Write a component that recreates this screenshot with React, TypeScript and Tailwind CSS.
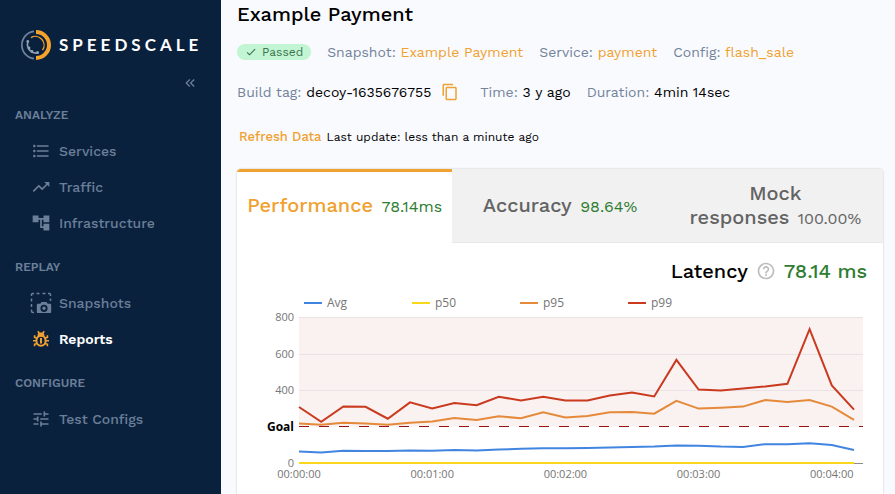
import type { ReactNode } from "react";
import {
  MdAccountTree,
  MdCheck,
  MdContentCopy,
  MdFormatListBulleted,
  MdHelpOutline,
  MdKeyboardDoubleArrowLeft,
  MdTrendingUp,
  MdTune,
} from "react-icons/md";

const STEP = 22.2;
const PLOT = { left: 62, right: 626, top: 27, bottom: 173 };

const series = [
  {
    name: "Avg",
    color: "#4285e0",
    values: [63, 57, 67, 65, 65, 69, 67, 72, 69, 74, 78, 81, 81, 83, 85, 88, 90, 96, 94, 90, 88, 103, 103, 108, 99, 72],
  },
  {
    name: "p50",
    color: "#f8d71c",
    values: [0, 0, 0, 0, 0, 0, 0, 0, 0, 0, 0, 0, 0, 0, 0, 0, 0, 0, 0, 0, 0, 0, 0, 0, 0, 0],
  },
  {
    name: "p95",
    color: "#e58a3a",
    values: [216, 210, 221, 217, 210, 221, 228, 247, 236, 256, 245, 278, 250, 258, 278, 280, 270, 341, 298, 303, 309, 345, 334, 345, 309, 236],
  },
  {
    name: "p99",
    color: "#c93a1e",
    values: [307, 225, 310, 308, 243, 332, 299, 329, 316, 363, 343, 363, 343, 343, 370, 387, 365, 565, 403, 397, 408, 419, 434, 733, 425, 292],
  },
];

const toY = (value: number) => PLOT.bottom - (value / 800) * (PLOT.bottom - PLOT.top);

const toPoints = (values: number[]) =>
  values.map((v, i) => `${PLOT.left + i * STEP},${toY(v).toFixed(1)}`).join(" ");

function LogoMark() {
  return (
    <svg viewBox="0 0 32 32" className="w-8 h-8" fill="none" aria-hidden="true">
      <path d="M16 3a13 13 0 0 1 0 26" stroke="#f5a32c" strokeWidth="4" />
      <path d="M14 2.3a13.8 13.8 0 0 0 0 27.4" stroke="#71839a" strokeWidth="1.7" />
      <path d="M11 8.6a8.7 8.7 0 0 1 11.5 12.5" stroke="#f5a32c" strokeWidth="1.3" />
      <path d="M8 12.5a8.7 8.7 0 0 0 10.5 11.3" stroke="#8fa0b5" strokeWidth="1.6" />
      <circle cx="7.8" cy="12.5" r="1.4" fill="#8fa0b5" />
      <circle cx="9" cy="19" r="1.4" fill="#8fa0b5" />
      <circle cx="12" cy="22.5" r="1.4" fill="#8fa0b5" />
      <circle cx="17.5" cy="23.6" r="1.5" fill="#8fa0b5" />
    </svg>
  );
}

function SnapshotIcon() {
  return (
    <svg viewBox="0 0 22 22" className="w-[22px] h-[22px]" fill="none" aria-hidden="true">
      <path
        d="M1.5 4V2.5Q1.5 1.5 2.5 1.5H4M6.5 1.5h3M12.5 1.5h3M18 1.5h1.5q1 0 1 1V4M20.5 6.5v2.5M1.5 6.5v3M1.5 12v3M1.5 17.5v1.5q0 1.5 1.5 1.5h1"
        stroke="currentColor"
        strokeWidth="1.5"
      />
      <path
        fill="currentColor"
        fillRule="evenodd"
        d="M11.5 10h5l1.2 1.7H20q1.2 0 1.2 1.2v7q0 1.2-1.2 1.2H8q-1.2 0-1.2-1.2v-7q0-1.2 1.2-1.2h2.3zM14 12.7a3.6 3.6 0 1 0 0 7.2 3.6 3.6 0 0 0 0-7.2zm0 1.9a1.7 1.7 0 1 1 0 3.4 1.7 1.7 0 0 1 0-3.4z"
      />
    </svg>
  );
}

function BugIcon() {
  return (
    <svg viewBox="0 0 18 18" className="w-[18px] h-[18px]" fill="none" stroke="currentColor" aria-hidden="true">
      <path d="M5.8 1.2l1.5 2M12.2 1.2l-1.5 2" strokeWidth="1.6" />
      <path d="M5.6 6.6V5.400Q5.600 2.600 8 2.600h2q2.400 0 2.400 2.800v1.200z" fill="currentColor" stroke="none" />
      <ellipse cx="9" cy="10.8" rx="4.6" ry="5" strokeWidth="2" />
      <path d="M9 8v5.400" strokeWidth="2" />
      <path d="M4.800 8 2.600 7.300V5.200M4.500 10.800H1M4.800 13.600l-2.200.7v2M13.200 8l2.200-.7V5.200M13.500 10.800H17M13.200 13.600l2.200.7v2" strokeWidth="1.600" />
    </svg>
  );
}

function NavGroup({ title, children }: { title: string; children: ReactNode }) {
  return (
    <div className="pb-4">
      <h2 className="pl-[15px] pb-2 text-xs leading-5 font-semibold text-[#6b7f98]">{title}</h2>
      <ul>{children}</ul>
    </div>
  );
}

function NavItem({ icon, label, active = false }: { icon: ReactNode; label: string; active?: boolean }) {
  return (
    <li>
      <a
        href="#"
        aria-current={active ? "page" : undefined}
        className={
          active
            ? "flex items-center h-9 pl-[30px] gap-[7px] text-sm font-semibold text-white"
            : "flex items-center h-9 pl-[30px] gap-[7px] text-sm font-medium text-[#6b7f98]"
        }
      >
        <span className={active ? "flex w-[22px] justify-center text-[#f0a030]" : "flex w-[22px] justify-center"}>{icon}</span>
        {label}
      </a>
    </li>
  );
}

function Sidebar() {
  return (
    <aside className="w-[221px] shrink-0 bg-[#0a213e]">
      <div className="flex items-center gap-[7px] pl-5 pt-[29px]">
        <LogoMark />
        <span className="font-['Lato',sans-serif] text-[17px] leading-8 font-bold tracking-[4px] text-white">SPEEDSCALE</span>
      </div>
      <div className="flex justify-end pr-[23px] pt-[14px] pb-[14px]">
        <button type="button" aria-label="Collapse menu" className="text-[#6b7f98]">
          <MdKeyboardDoubleArrowLeft className="w-4 h-4" />
        </button>
      </div>
      <nav>
        <NavGroup title="ANALYZE">
          <NavItem icon={<MdFormatListBulleted className="w-5 h-5" />} label="Services" />
          <NavItem icon={<MdTrendingUp className="w-5 h-5" />} label="Traffic" />
          <NavItem icon={<MdAccountTree className="w-5 h-5" />} label="Infrastructure" />
        </NavGroup>
        <NavGroup title="REPLAY">
          <NavItem icon={<SnapshotIcon />} label="Snapshots" />
          <NavItem icon={<BugIcon />} label="Reports" active />
        </NavGroup>
        <NavGroup title="CONFIGURE">
          <NavItem icon={<MdTune className="w-5 h-5" />} label="Test Configs" />
        </NavGroup>
      </nav>
    </aside>
  );
}

function Tab({ label, value, active = false, good = false }: { label: string; value: string; active?: boolean; good?: boolean }) {
  return (
    <button
      type="button"
      role="tab"
      aria-selected={active}
      className={
        active
          ? "flex-1 min-w-0 h-[74px] px-2 pb-1 border-t-[3px] border-[#f0a12f] bg-white text-xl leading-6 font-medium text-[#f0a12f]"
          : "flex-1 min-w-0 h-[74px] px-2 border-b border-[#e9e9e9] bg-[#f1f1f1] text-xl leading-6 font-medium text-[#636363]"
      }
    >
      {label}{"\u00a0"}
      <span className={good ? "ml-[2px] text-base leading-6 font-normal text-[#2e7d32]" : "ml-[2px] text-base leading-6 font-normal text-[#636363]"}>
        {value}
      </span>
    </button>
  );
}

function LatencyChart() {
  return (
    <svg viewBox="0 0 646 195" className="block w-full font-['Open_Sans','Noto_Sans',sans-serif]" role="img" aria-label="Latency over time">
      {/* Legend */}
      {series.map((s, i) => (
        <g key={s.name}>
          <path d={`M${67 + i * 108} 13h18`} stroke={s.color} strokeWidth="2" />
          <text x={90 + i * 108} y="17" fontSize="12" fill="#757575">{s.name}</text>
        </g>
      ))}

      {/* Area above the goal */}
      <rect x={PLOT.left} y={PLOT.top} width={PLOT.right - PLOT.left} height={toY(200) - PLOT.top} fill="#faf1f1" />
      {[800, 600, 400].map((v) => (
        <path key={v} d={`M${PLOT.left} ${Math.round(toY(v)) + 0.5}H${PLOT.right}`} stroke="#eae2e4" />
      ))}
      {[800, 600, 400, 0].map((v) => (
        <text key={v} x="57" y={toY(v) + 4} fontSize="11" textAnchor="end" fill="#757575">{v}</text>
      ))}
      <text x="57" y={toY(200) + 4} fontSize="12" fontWeight="700" textAnchor="end" fill="#000">Goal</text>

      <path d={`M${PLOT.left} ${PLOT.bottom + 0.5}H${PLOT.right}`} stroke="#8c8c8c" />
      <path d={`M${PLOT.left} 136.5H${PLOT.right}`} stroke="#971414" strokeDasharray="10 10" />
      {series.map((s) => (
        <polyline key={s.name} points={toPoints(s.values)} fill="none" stroke={s.color} strokeWidth="2" />
      ))}
      {[0, 1, 2, 3, 4].map((m) => (
        <text key={m} x={PLOT.left + m * STEP * 6} y="188" fontSize="11" textAnchor="middle" fill="#757575">
          {`00:0${m}:00`}
        </text>
      ))}
    </svg>
  );
}

function ReportHeader() {
  return (
    <header>
      <h1 className="pt-[2px] text-xl leading-6 font-medium text-black">Example Payment</h1>
      <div className="flex items-center gap-4 pt-4 text-sm leading-5 text-[#73839a]">
        <span className="flex items-center gap-[5px] h-4 px-2 rounded-full bg-[#c1f5d3] text-xs text-[#3f7350]">
          <MdCheck className="w-3 h-3" />
          Passed
        </span>
        <span>Snapshot: <a href="#" className="text-[#f0a12f]">Example Payment</a></span>
        <span>Service: <a href="#" className="text-[#f0a12f]">payment</a></span>
        <span>Config: <a href="#" className="text-[#f0a12f]">flash_sale</a></span>
      </div>
      <div className="flex items-center gap-4 pt-5 text-sm leading-5 text-[#73839a]">
        <span className="flex items-center gap-[6px]">
          <span>Build tag: <span className="text-black">decoy-1635676755</span></span>
          <button type="button" aria-label="Copy build tag" className="ml-1 mr-[5px] text-[#f0a12f]">
            <MdContentCopy className="w-[18px] h-[18px]" />
          </button>
        </span>
        <span>Time: <span className="text-black">3 y ago</span></span>
        <span>Duration: <span className="text-black">4min 14sec</span></span>
      </div>
      <div className="flex items-center gap-[5px] pl-[2px] pt-[25px] pb-[22px] text-xs leading-5 text-black">
        <button type="button" className="text-[13px] font-medium text-[#f0a12f]">Refresh Data</button>
        <span>Last update: less than a minute ago</span>
      </div>
    </header>
  );
}

export default function App() {
  return (
    <div className="flex min-h-screen bg-[#f9fafe] font-['Work_Sans',Inter,sans-serif]">
      <Sidebar />
      <main className="flex flex-1 min-w-0 flex-col pl-4 pr-3">
        <ReportHeader />
        <section className="flex-1 bg-white rounded-t shadow-[0_0_2px_rgba(0,0,0,0.25)]">
          <div role="tablist" className="flex rounded-t overflow-hidden">
            <Tab label="Performance" value="78.14ms" active good />
            <Tab label="Accuracy" value="98.64%" good />
            <Tab label="Mock responses" value="100.00%" />
          </div>
          <div className="flex items-center justify-end gap-2 pt-4 pr-4 text-xl leading-6 font-medium text-black">
            <h2>Latency</h2>
            <MdHelpOutline className="w-5 h-5 text-[#bdbdbd]" />
            <span className="text-[#2e7d32]">78.14 ms</span>
          </div>
          <div className="pt-[7px]">
            <LatencyChart />
          </div>
        </section>
      </main>
    </div>
  );
}
